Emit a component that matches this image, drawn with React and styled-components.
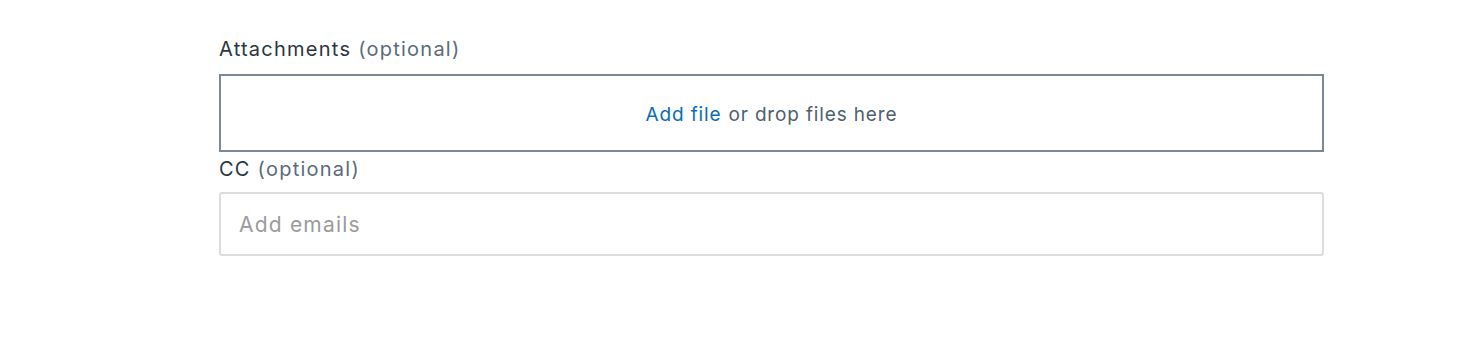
import React from "react";
import styled, { createGlobalStyle } from "styled-components";

const Global = createGlobalStyle`
  html, body { margin: 0; padding: 0; background: #fff; }
  body { font-family: Inter, "Noto Sans", sans-serif; }
`;

const Page = styled.div`
  width: 1484px;
  height: 356px;
  box-sizing: border-box;
  padding: 36px 160px 0 219px;
`;

const Field = styled.div`
  display: flex;
  flex-direction: column;
`;

const Label = styled.label`
  font-size: 20px;
  letter-spacing: 1.25px;
  line-height: 26px;
  color: #2c3640;
  margin-bottom: ${(p) => p.$gap}px;
`;

const Optional = styled.span`
  color: #5b6b7a;
`;

const DropZone = styled.div`
  height: 78px;
  box-sizing: border-box;
  border: 2px solid #7c8893;
  display: flex;
  align-items: center;
  justify-content: center;
  font-size: 19px;
  letter-spacing: 0.85px;
  color: #4f5f6e;
  margin-bottom: 4px;
  padding-top: 2px;
`;

const Link = styled.a`
  color: #0a6cb5;
  text-decoration: none;
  cursor: pointer;
  margin-right: 7px;
`;

const Input = styled.input`
  height: 64px;
  box-sizing: border-box;
  border: 2px solid #dcdcdc;
  border-radius: 3px;
  padding: 0 18px;
  font-family: inherit;
  font-size: 21px;
  letter-spacing: 1.2px;
  color: #333;
  outline: none;
  &::placeholder { color: #9b9b9b; }
`;

export default function App() {
  return (
    <>
      <Global />
      <Page>
        <Field>
          <Label $gap={12}>
            Attachments <Optional>(optional)</Optional>
          </Label>
          <DropZone>
            <Link>Add file</Link> or drop files here
          </DropZone>
        </Field>
        <Field>
          <Label $gap={10}>
            CC <Optional>(optional)</Optional>
          </Label>
          <Input placeholder="Add emails" />
        </Field>
      </Page>
    </>
  );
}
